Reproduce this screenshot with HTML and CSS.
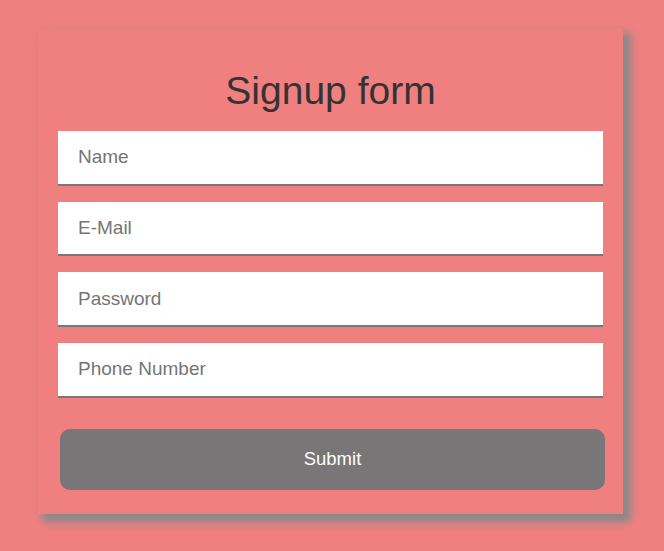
FILE: index.html
```html
<!DOCTYPE html>
<html>
<head>
<meta charset="utf-8">
<link rel="stylesheet" href="styles.css">
</head>
<body>
<div class="page">
  <form class="card">
    <h1 class="title">Signup form</h1>
    <input class="field" type="text" placeholder="Name">
    <input class="field" type="email" placeholder="E-Mail">
    <input class="field" type="password" placeholder="Password">
    <input class="field" type="tel" placeholder="Phone Number">
    <button class="submit" type="button">Submit</button>
  </form>
</div>
</body>
</html>
```
FILE: styles.css
```css
html, body {
  margin: 0;
  padding: 0;
  background: #f08080;
  font-family: "Liberation Sans", Arial, sans-serif;
}
.page {
  box-sizing: border-box;
  min-height: 551px;
  padding: 29px 0 0 38px;
  display: flex;
  align-items: flex-start;
}
.card {
  box-sizing: border-box;
  width: 585px;
  margin: 0;
  padding: 39px 20px 24px;
  background: #f08080;
  box-shadow: 6px 6px 8px 2px #888;
  display: flex;
  flex-direction: column;
}
.title {
  margin: 0 0 18px;
  font-size: 39px;
  line-height: 45px;
  font-weight: normal;
  color: #333;
  text-align: center;
}
.field {
  box-sizing: border-box;
  width: 545px;
  height: 54.67px;
  margin: 0 0 16px;
  padding: 0 20px;
  border: none;
  border-bottom: 2px solid #777;
  background: #fff;
  font-family: "Liberation Sans", Arial, sans-serif;
  font-size: 19px;
  color: #333;
  outline: none;
}
.field::placeholder {
  color: #757575;
}
.field:last-of-type {
  margin-bottom: 31.3px;
}
.submit {
  box-sizing: border-box;
  width: 545px;
  height: 60.7px;
  margin-left: 2px;
  border: none;
  border-radius: 10px;
  background: #787676;
  color: #fff;
  font-family: "Liberation Sans", Arial, sans-serif;
  font-size: 18.5px;
}
```
